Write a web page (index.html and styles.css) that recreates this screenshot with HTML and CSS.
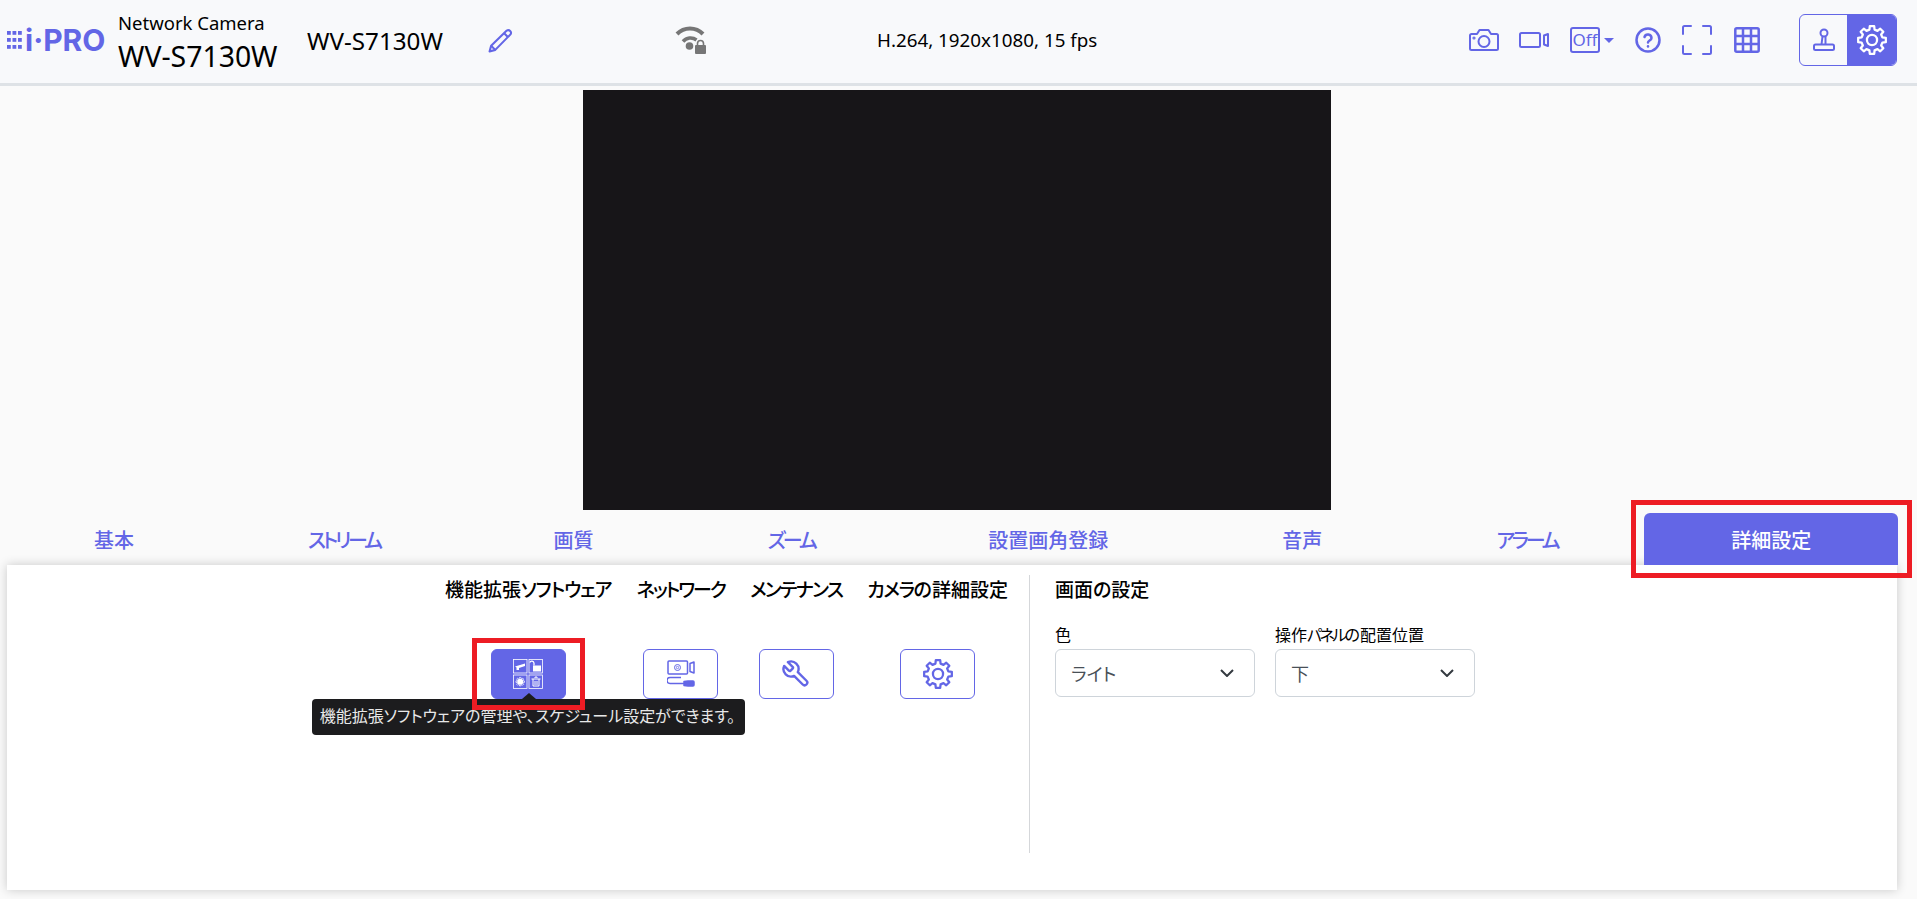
FILE: index.html
```html
<!DOCTYPE html>
<html lang="ja">
  <head>
    <meta charset="utf-8" />
    <title>WV-S7130W</title>
    <link rel="stylesheet" href="styles.css">
  </head>

  <body>
    <svg class="defs" width="0" height="0">
      <symbol id="gear" viewBox="-12 -12 24 24">
        <path d="M-1.94 -7.76L-1.64 -10.37L1.64 -10.37L1.94 -7.76L4.12 -6.86L6.17 -8.49L8.49 -6.17L6.86 -4.12L7.76 -1.94L10.37 -1.64L10.37 1.64L7.76 1.94L6.86 4.12L8.49 6.17L6.17 8.49L4.12 6.86L1.94 7.76L1.64 10.37L-1.64 10.37L-1.94 7.76L-4.12 6.86L-6.17 8.49L-8.49 6.17L-6.86 4.12L-7.76 1.94L-10.37 1.64L-10.37 -1.64L-7.76 -1.94L-6.86 -4.12L-8.49 -6.17L-6.17 -8.49L-4.12 -6.86Z" fill="none" stroke="currentColor" stroke-width="1.7" stroke-linejoin="round" />
        <circle r="3.8" fill="none" stroke="currentColor" stroke-width="1.7" />
      </symbol>
    </svg>

    <header class="topbar">
      <div class="logo">
        <svg class="logo-dots" width="15" height="20" viewBox="0 0 15 20">
          <g fill="#6366e6">
            <rect x="0" y="1" width="3.800" height="3.800" /><rect x="5.500" y="1" width="3.800" height="3.800" /><rect x="11" y="1" width="3.800" height="3.800" />
            <rect x="0" y="8" width="3.800" height="3.800" /><rect x="5.500" y="8" width="3.800" height="3.800" /><rect x="11" y="8" width="3.800" height="3.800" />
            <rect x="0" y="15" width="3.800" height="3.800" /><rect x="5.500" y="15" width="3.800" height="3.800" /><rect x="11" y="15" width="3.800" height="3.800" />
          </g>
        </svg>
        <span class="logo-text">i·PRO</span>
      </div>
      <div class="product">
        <div class="product-type">Network Camera</div>
        <div class="product-model">WV-S7130W</div>
      </div>
      <div class="camera-name">WV-S7130W</div>
      <svg class="pencil" width="25" height="25" viewBox="0 0 24 24" fill="none" stroke="#6366e6" stroke-width="2" stroke-linejoin="round">
        <path d="M18 2.500a2.600 2.600 0 0 1 3.600 3.600L7 21l-5.500 1.500L3 17z" />
        <path d="M15.500 5l3.600 3.600M3 17l4 4" />
      </svg>
      <svg class="wifi" width="31" height="28" viewBox="0 0 31 28" fill="none" stroke="#767676">
        <path d="M2 8A18 18 0 0 1 28 8" stroke-width="4" />
        <path d="M8 15.500A10 10 0 0 1 21.500 14" stroke-width="3.500" />
        <circle cx="14.500" cy="20" r="3.800" fill="#767676" stroke="none" />
        <rect x="20" y="19" width="11" height="9" rx="1" fill="#767676" stroke="none" />
        <path d="M22.500 20v-2.500a3 3 0 0 1 6 0V20" stroke-width="1.600" />
      </svg>
      <div class="stream-info">H.264, 1920x1080, 15 fps</div>

      <div class="tools">
        <svg class="tool-camera" width="30" height="22" viewBox="0 0 30 22" fill="none" stroke="#6366e6" stroke-width="2" stroke-linejoin="round">
          <path d="M2.500 5H8l2.500-4h9L22 5h5.500A1.500 1.500 0 0 1 29 6.500V19.500a1.500 1.500 0 0 1-1.500 1.500h-25A1.500 1.500 0 0 1 1 19.500V6.500A1.500 1.500 0 0 1 2.500 5z" />
          <circle cx="15" cy="12.500" r="5.500" />
          <circle cx="5" cy="9" r="0.600" />
        </svg>
        <svg class="tool-video" width="30" height="16" viewBox="0 0 30 16" fill="none" stroke="#6366e6" stroke-width="2" stroke-linejoin="round">
          <rect x="1" y="1" width="20" height="14" rx="1.500" />
          <path d="M29 2v12l-4-1.500v-9z" />
        </svg>
        <div class="tool-off">
          <span class="off-box">Off</span>
          <span class="off-caret"></span>
        </div>
        <svg class="tool-help" width="26" height="26" viewBox="0 0 26 26" fill="none" stroke="#6366e6" stroke-width="2.500" stroke-linecap="round">
          <circle cx="13" cy="13" r="11.500" />
          <path d="M9.500 10a3.600 3.600 0 0 1 7 1c0 2.500-3.500 2.500-3.500 4.500" />
          <path d="M13 19.300v0.100" />
        </svg>
        <svg class="tool-full" width="30" height="30" viewBox="0 0 30 30" fill="none" stroke="#6366e6" stroke-width="2" stroke-linecap="round">
          <path d="M1 9V2.500A1.500 1.500 0 0 1 2.500 1H9M21 1h6.500A1.500 1.500 0 0 1 29 2.500V9M29 21v6.500a1.500 1.500 0 0 1-1.500 1.500H21M9 29H2.500A1.500 1.500 0 0 1 1 27.500V21" />
        </svg>
        <svg class="tool-grid" width="26" height="26" viewBox="0 0 26 26" fill="none" stroke="#6366e6" stroke-width="2.500">
          <rect x="1.300" y="1.300" width="23.400" height="23.400" rx="1.500" />
          <path d="M9 1v24M17 1v24M1 9h24M1 17h24" />
        </svg>
        <div class="mode-switch">
          <div class="mode-btn">
            <svg width="24" height="24" viewBox="0 0 24 24" fill="none" stroke="#6366e6" stroke-width="2" stroke-linejoin="round">
              <circle cx="12" cy="5" r="3.500" />
              <path d="M10.500 8.500L9.500 16.500M13.500 8.500V16.500" />
              <rect x="2" y="16.500" width="20" height="5.500" rx="1.500" />
            </svg>
          </div>
          <div class="mode-btn mode-btn-on">
            <svg width="32" height="32"><use href="#gear" /></svg>
          </div>
        </div>
      </div>
    </header>

    <div class="video"></div>

    <nav class="tabs">
      <div class="tab">基本</div>
      <div class="tab"><span class="kana">ストリーム</span></div>
      <div class="tab">画質</div>
      <div class="tab"><span class="kana">ズーム</span></div>
      <div class="tab">設置画角登録</div>
      <div class="tab">音声</div>
      <div class="tab"><span class="kana">アラーム</span></div>
      <div class="tab tab-active">詳細設定<span class="mark mark-tab"></span></div>
    </nav>

    <main class="panel">
      <section class="panel-left">
        <div class="group">
          <h2>機能拡張<span class="kana kana-loose">ソフトウェア</span></h2>
          <div class="icon-btn icon-btn-on">
            <svg width="30" height="30" viewBox="0 0 30 30" fill="none" stroke="#fff" stroke-width="0.800">
              <rect x="0.500" y="0.500" width="13.500" height="13.500" />
              <rect x="16" y="0.500" width="13.500" height="13.500" />
              <rect x="0.500" y="16" width="13.500" height="13.500" />
              <rect x="16" y="16" width="13.500" height="13.500" />
              <path d="M2 7.500l10-3v2.500l-6 2v2H3.500V8.500z" fill="#fff" stroke="none" />
              <rect x="20" y="6.500" width="8" height="6" fill="#fff" stroke="none" />
              <path d="M21 6.500V4a2.200 2.200 0 0 0-4.200-0.500" stroke-width="1.300" />
              <use href="#gear" x="2.200" y="17.700" width="10" height="10" stroke-width="2" />
              <circle cx="7.200" cy="22.700" r="3" fill="#fff" stroke="none" />
              <path d="M18.500 20h9M20 20v7h6v-7M22 19v-1h2v1M22 22v4M24 22v4" stroke-width="1" />
            </svg>
            <span class="tooltip">機能拡張ソフトウェアの管理や、スケジュール設定ができます。</span>
            <span class="mark mark-btn"></span>
          </div>
        </div>
        <div class="group">
          <h2><span class="kana kana-tight">ネットワーク</span></h2>
          <div class="icon-btn">
            <svg width="28" height="28" viewBox="0 0 28 28" fill="none" stroke="#6366e6" stroke-width="1.500" stroke-linejoin="round">
              <rect x="1" y="1" width="19.500" height="13" rx="1" />
              <circle cx="10.500" cy="7.500" r="3" stroke-width="1" />
              <circle cx="10.500" cy="7.500" r="1.200" stroke-width="0.800" />
              <path d="M27 2v11l-4-1.500v-8z" />
              <path d="M14 17.500H3a2.700 2.700 0 0 0 0 6h14" />
              <path d="M17 21.500l4-0.500h5a1 1 0 0 1 1 1v3a1 1 0 0 1-1 1h-5l-4-0.500z" fill="#6366e6" />
            </svg>
          </div>
        </div>
        <div class="group">
          <h2><span class="kana kana-mid">メンテナンス</span></h2>
          <div class="icon-btn">
            <svg class="wrench" width="30" height="30" viewBox="0 0 24 24" fill="none" stroke="#6366e6" stroke-width="1.900" stroke-linejoin="round">
              <path d="M14.700 6.300a1 1 0 0 0 0 1.400l1.600 1.600a1 1 0 0 0 1.400 0l3.770-3.770a6 6 0 0 1-7.940 7.940l-6.910 6.910a2.120 2.120 0 0 1-3-3l6.910-6.910a6 6 0 0 1 7.940-7.940l-3.760 3.760z" />
            </svg>
          </div>
        </div>
        <div class="group">
          <h2><span class="kana">カメラ</span>の詳細設定</h2>
          <div class="icon-btn">
            <svg width="32" height="32"><use href="#gear" /></svg>
          </div>
        </div>
      </section>

      <section class="panel-right">
        <h2>画面の設定</h2>
        <div class="fields">
          <div class="field">
            <label>色</label>
            <div class="select">
              <span>ライト</span>
              <svg width="14" height="8" viewBox="0 0 14 8" fill="none" stroke="#343a40" stroke-width="2"><path d="M1 1l6 6 6-6" /></svg>
            </div>
          </div>
          <div class="field">
            <label>操作<span class="kana">パネル</span>の配置位置</label>
            <div class="select">
              <span>下</span>
              <svg width="14" height="8" viewBox="0 0 14 8" fill="none" stroke="#343a40" stroke-width="2"><path d="M1 1l6 6 6-6" /></svg>
            </div>
          </div>
        </div>
      </section>
    </main>
  </body>
</html>
```

FILE: styles.css
```css
* {
  box-sizing: border-box;
}

html,
body {
  height: 100%;
}

body {
  margin: 0;
  overflow: hidden;
  background-color: #fafafa;
  color: #000;
  font-family: "Noto Sans", "Noto Sans CJK JP", sans-serif;
  font-feature-settings: "palt";
}

.defs {
  display: block;
  height: 0;
}

/* top bar */
.topbar {
  display: flex;
  align-items: center;
  height: 86px;
  padding: 0 20px 3px 7px;
  background-color: #f8f9fb;
  border-bottom: 3px solid #dee2e6;
}

.logo {
  display: flex;
  align-items: center;
  width: 97px;
  white-space: nowrap;
}

.logo-dots {
  flex: none;
  margin-right: 3px;
}

.logo-text {
  color: #6366e6;
  font-family: "Inter", sans-serif;
  font-size: 30px;
  font-weight: 700;
}

.product {
  margin: 3.500px 0 0 14px;
  width: 189px;
}

.product-type {
  font-size: 18.500px;
  line-height: 24px;
}

.product-model {
  margin-top: 3.500px;
  font-size: 28.400px;
  line-height: 34px;
}

.camera-name {
  width: 181px;
  font-size: 24.200px;
}

.pencil {
  flex: none;
}

.wifi {
  flex: none;
  margin-left: 162px;
}

.stream-info {
  margin-left: 171px;
  font-size: 18.800px;
}

.tools {
  display: flex;
  align-items: center;
  margin-left: auto;
}

.tool-video {
  margin-left: 20px;
}

.tool-off {
  display: flex;
  align-items: center;
  margin-left: 21px;
}

.off-box {
  width: 30px;
  height: 26px;
  border: 2px solid #6366e6;
  border-radius: 3px;
  color: #6366e6;
  font-size: 17px;
  font-weight: 400;
  line-height: 21px;
  text-align: center;
}

.off-caret {
  margin-left: 4px;
  border-left: 5px solid transparent;
  border-right: 5px solid transparent;
  border-top: 5px solid #6366e6;
}

.tool-help {
  margin-left: 21px;
}

.tool-full {
  margin-left: 21px;
}

.tool-grid {
  margin-left: 22px;
}

.mode-switch {
  display: flex;
  margin-left: 39px;
  height: 52px;
  border: 1px solid #6366e6;
  border-radius: 6px;
  overflow: hidden;
}

.mode-btn {
  display: flex;
  justify-content: center;
  align-items: center;
  width: 47px;
}

.mode-btn-on {
  width: 49px;
  background-color: #6366e6;
  color: #fff;
}

.video {
  width: 748px;
  height: 420px;
  margin: 4px 0 0 583px;
  background-color: #171518;
}

/* tabs */
.tabs {
  display: flex;
  height: 52px;
  margin: 3px 20px 0 7px;
}

.tab {
  position: relative;
  display: flex;
  flex: 1 1 auto;
  justify-content: center;
  align-items: center;
  padding: 0 87px;
  color: #6366e6;
  font-size: 20px;
  font-weight: 500;
  white-space: nowrap;
}

.tab .kana {
  letter-spacing: -3.200px;
}

.tab-active {
  background-color: #6366e6;
  border-radius: 6px 6px 0 0;
  color: #fff;
}

.mark {
  position: absolute;
  z-index: 5;
  border: 5px solid #ed1c24;
  pointer-events: none;
}

.mark-tab {
  top: -13px;
  right: -14px;
  bottom: -13px;
  left: -13px;
}

.mark-btn {
  top: -12px;
  right: -20px;
  bottom: -12px;
  left: -20px;
}

/* bottom panel */
.panel {
  display: flex;
  height: 325px;
  margin: 0 20px 0 7px;
  padding: 10px 0 37px;
  background-color: #fff;
  box-shadow: 0 0 10px rgba(0, 0, 0, 0.2);
}

.panel h2 {
  margin: 0;
  font-size: 19px;
  font-weight: 500;
  line-height: 30px;
  white-space: nowrap;
}

.kana {
  letter-spacing: -1.400px;
}

.kana-loose {
  letter-spacing: -1px;
}

.kana-mid {
  letter-spacing: -1.700px;
}

.kana-tight {
  letter-spacing: -2px;
}

.panel-left {
  display: flex;
  justify-content: flex-end;
  gap: 25px;
  width: 1023px;
  padding-right: 21px;
  border-right: 1px solid #d5d7da;
}

.group {
  display: flex;
  flex-direction: column;
  align-items: center;
}

.icon-btn {
  position: relative;
  display: flex;
  justify-content: center;
  align-items: center;
  width: 75px;
  height: 50px;
  margin-top: 44px;
  border: 1px solid #6366e6;
  border-radius: 6px;
  color: #6366e6;
}

.icon-btn-on {
  background-color: #6366e6;
  color: #fff;
}

.wrench {
  transform: scaleX(-1);
}

.tooltip {
  position: absolute;
  top: 49px;
  left: -180px;
  width: 433px;
  height: 36px;
  padding: 0 8px;
  background-color: #1c1c1e;
  border-radius: 4px;
  color: #e8e8e8;
  font-size: 16px;
  line-height: 35px;
  white-space: nowrap;
}

.tooltip::before {
  content: "";
  position: absolute;
  top: -6px;
  left: 210px;
  border-left: 7px solid transparent;
  border-right: 7px solid transparent;
  border-bottom: 6px solid #1c1c1e;
}

.panel-right {
  padding-left: 25px;
}

.fields {
  display: flex;
  gap: 20px;
  margin-top: 17px;
}

.field label {
  display: block;
  font-size: 16px;
  line-height: 27px;
}

.field .kana {
  letter-spacing: -2.600px;
}

.select {
  display: flex;
  justify-content: space-between;
  align-items: center;
  width: 200px;
  height: 48px;
  padding: 0 20px 0 15px;
  background-color: #fff;
  border: 1px solid #ced4da;
  border-radius: 6px;
  color: #495057;
  font-size: 18px;
}
```
